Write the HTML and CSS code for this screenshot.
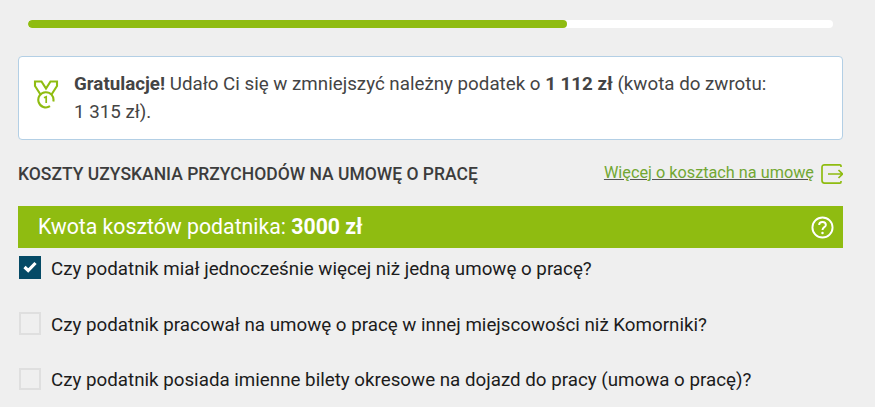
FILE: index.html
```html
<!DOCTYPE html>
<html lang="pl">
<head>
<meta charset="utf-8">
<title>Koszty uzyskania przychodów</title>
<link rel="stylesheet" href="styles.css">
</head>
<body>
<main class="page">
  <div class="progress"><div class="progress-fill"></div></div>
  <section class="alert">
    <svg class="medal" viewBox="0 0 26 30" width="26" height="30" fill="none" stroke="#8fbc11" stroke-width="2.100">
      <path d="M7.500 15.500 2 7V2.500H8.500L13 9.500 17.500 2.500H24V7L18.500 15.500"/>
      <path d="M17 27.200A7.600 7.600 0 1 1 20.300 22.500"/>
      <path d="M11 18.800 13.200 17.800V24" stroke-width="1.700"/>
    </svg>
    <p class="alert-text"><strong>Gratulacje!</strong> Udało Ci się w zmniejszyć należny podatek o <strong>1&nbsp;112&nbsp;zł</strong> (kwota do zwrotu: 1&nbsp;315&nbsp;zł).</p>
  </section>
  <header class="section-head">
    <h2 class="section-title">KOSZTY UZYSKANIA PRZYCHODÓW NA UMOWĘ O PRACĘ</h2>
    <a class="more" href="#">
      <span class="more-text">Więcej o kosztach na umowę</span>
      <svg class="more-icon" viewBox="0 0 22 20" width="22" height="20" fill="none" stroke="#8fbc11" stroke-width="1.700">
        <path d="M20 3V2C20 1.200 19.500 .9 19 .9H3.500C1.800 .9 1 1.700 1 3.400V16.600C1 18.300 1.800 19.100 3.500 19.100H19C19.500 19.100 20 18.800 20 18V17"/>
        <path d="M7 10H21.500M17.500 6 21.500 10 17.500 14"/>
      </svg>
    </a>
  </header>
  <div class="amount-bar">
    <span class="amount-text">Kwota kosztów podatnika: <strong>3000 zł</strong></span>
    <svg class="help" viewBox="0 0 24 24" width="23" height="23" fill="none" stroke="#fff" stroke-width="2">
      <circle cx="12" cy="12" r="10.500"/>
      <path d="M8.500 9.500C8.500 7.500 10 6.300 12 6.300S15.500 7.500 15.500 9.300C15.500 11.500 12 11.800 12 14.500"/>
      <circle cx="12" cy="17.800" r="1.300" fill="#fff" stroke="none"/>
    </svg>
  </div>
  <ul class="questions">
    <li class="question">
      <span class="box box-checked">
        <svg viewBox="0 0 14 12" width="14" height="12" fill="none" stroke="#fff" stroke-width="3.200"><path d="M1.500 6 5.200 9.500 12.500 2"/></svg>
      </span>
      <span class="question-text">Czy podatnik miał jednocześnie więcej niż jedną umowę o pracę?</span>
    </li>
    <li class="question">
      <span class="box"></span>
      <span class="question-text">Czy podatnik pracował na umowę o pracę w innej miejscowości niż Komorniki?</span>
    </li>
    <li class="question">
      <span class="box"></span>
      <span class="question-text">Czy podatnik posiada imienne bilety okresowe na dojazd do pracy (umowa o pracę)?</span>
    </li>
  </ul>
</main>
</body>
</html>
```
FILE: styles.css
```css
* { box-sizing: border-box; }
html, body { margin: 0; height: 100%; }
body {
  background: #efefef;
  font-family: Roboto, "Liberation Sans", sans-serif;
  color: #3c3c3c;
  overflow: hidden;
}
.page { padding: 20px 32px 0 18px; }
.progress {
  height: 8px;
  margin: 0 10px;
  background: #fff;
  border-radius: 4px;
  overflow: hidden;
}
.progress-fill {
  width: 539px;
  height: 100%;
  background: #8fbc11;
  border-radius: 4px;
}
.alert {
  display: flex;
  align-items: center;
  margin-top: 28px;
  height: 84px;
  padding: 0 20px 0 14px;
  background: #fff;
  border: 1px solid #b3cfe5;
  border-radius: 4px;
}
.medal { flex: none; margin: 0 15px 8px 0; }
.alert-text {
  margin: 0;
  font-size: 18.75px;
  line-height: 28.125px;
  color: #444;
}
.section-head {
  display: flex;
  justify-content: space-between;
  align-items: center;
  margin-top: 22px;
  height: 24px;
}
.section-title {
  margin: 0;
  font-size: 17.5px;
  font-weight: 500;
  color: #3c3c3c;
}
.more {
  display: flex;
  align-items: center;
  gap: 7px;
  color: #72a733;
  font-size: 16.25px;
  text-decoration: none;
}
.more-text {
  padding-bottom: 3px;
  text-decoration: underline;
  text-decoration-color: #555;
}
.amount-bar {
  display: flex;
  justify-content: space-between;
  align-items: center;
  margin-top: 20px;
  height: 42px;
  padding: 0 9px 0 20px;
  background: #8fbc11;
  color: #fff;
  font-size: 21.25px;
}
.amount-text { padding-bottom: 2px; }
.questions {
  list-style: none;
  margin: 0;
  padding: 8px 0 0;
  display: flex;
  flex-direction: column;
  gap: 33px;
}
.question {
  display: flex;
  align-items: center;
  gap: 10px;
  height: 22.8px;
  padding-left: 1px;
  font-size: 18.75px;
  color: #1c1c1c;
}
.question-text { padding-top: 2.7px; }
.box {
  flex: none;
  display: flex;
  align-items: center;
  justify-content: center;
  width: 22px;
  height: 100%;
  border: 2px solid #dfdfdf;
}
.box-checked { background: #054a66; border-color: #054a66; }
```
